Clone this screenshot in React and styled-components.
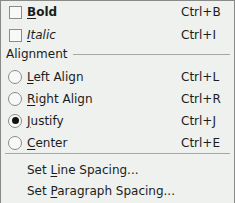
import styled, { createGlobalStyle } from "styled-components";

const GlobalStyle = createGlobalStyle`
    html, body {
        margin: 0;
        padding: 0;
        background: #eef1ee;
    }
`;

const Menu = styled.div`
    width: 235px;
    height: 203px;
    box-sizing: border-box;
    overflow: hidden;
    background: #eef1ee;
    border: 1px solid #878a87;
    border-bottom: none;
    font-family: "DejaVu Sans", "Liberation Sans", sans-serif;
    font-size: 12px;
    line-height: 14px;
    color: #1c1c1c;
    display: flex;
    flex-direction: column;
`;

const Item = styled.div`
    display: flex;
    align-items: center;
    height: ${({ $h = 21 }) => $h}px;
    box-sizing: border-box;
    padding-left: ${({ $pl = 7 }) => $pl}px;
    padding-top: ${({ $pt = 0 }) => $pt}px;
    padding-bottom: ${({ $pb = 0 }) => $pb}px;
    flex-shrink: 0;
`;

const Slot = styled.span`
    width: 19px;
    flex-shrink: 0;
    display: flex;
    align-items: center;
`;

const Label = styled.span`
    flex: 1;
    white-space: nowrap;
    font-weight: ${({ $bold }) => ($bold ? "bold" : "normal")};
    font-style: ${({ $italic }) => ($italic ? "italic" : "normal")};
`;

const Key = styled.span`
    width: 53px;
    flex-shrink: 0;
    white-space: nowrap;
`;

const Mnemonic = styled.span`
    text-decoration: underline;
    text-underline-offset: 2px;
`;

const CheckBox = styled.span`
    display: block;
    width: 13px;
    height: 13px;
    box-sizing: border-box;
    margin-left: 1px;
    border: 1px solid #8a8d8a;
    background: #f7f8f7;
`;

const Radio = styled.span`
    position: relative;
    display: block;
    width: 14px;
    height: 14px;
    box-sizing: border-box;
    border-radius: 50%;
    border: 1px solid #8a8d8a;
    background: #f7f8f7;

    &::after {
        content: "";
        display: ${({ $on }) => ($on ? "block" : "none")};
        position: absolute;
        left: 2.5px;
        top: 2.5px;
        width: 7px;
        height: 7px;
        border-radius: 50%;
        background: #111;
    }
`;

const Header = styled.div`
    display: flex;
    align-items: center;
    height: 18px;
    padding: 0 4px 4px 5px;
    box-sizing: border-box;
    gap: 6px;
    flex-shrink: 0;
`;

const Rule = styled.div`
    flex: 1;
    height: 1px;
    background: #a5a8a5;
`;

const Separator = styled.div`
    height: 6px;
    flex-shrink: 0;
    padding: 0 4px;

    &::before {
        content: "";
        display: block;
        height: 1px;
        background: #a5a8a5;
    }
`;

const label = (text, idx) => (
    <>
        {text.slice(0, idx)}
        <Mnemonic>{text[idx]}</Mnemonic>
        {text.slice(idx + 1)}
    </>
);

const radios = [
    { text: "Left Align", key: "Ctrl+L" },
    { text: "Right Align", key: "Ctrl+R" },
    { text: "Justify", key: "Ctrl+J", on: true },
    { text: "Center", key: "Ctrl+E" },
];

export default function App() {
    return (
        <>
            <GlobalStyle />
            <Menu>
                <Item $h={23} $pb={1}>
                    <Slot>
                        <CheckBox />
                    </Slot>
                    <Label $bold>{label("Bold", 0)}</Label>
                    <Key>Ctrl+B</Key>
                </Item>
                <Item $h={23} $pb={1}>
                    <Slot>
                        <CheckBox />
                    </Slot>
                    <Label $italic>{label("Italic", 0)}</Label>
                    <Key>Ctrl+I</Key>
                </Item>
                <Header>
                    <span>Alignment</span>
                    <Rule />
                </Header>
                {radios.map((r) => (
                    <Item key={r.text} $h={22} $pt={1}>
                        <Slot>
                            <Radio $on={r.on} />
                        </Slot>
                        <Label>{label(r.text, 0)}</Label>
                        <Key>{r.key}</Key>
                    </Item>
                ))}
                <Separator />
                <Item $pl={26}>
                    <Label>{label("Set Line Spacing...", 4)}</Label>
                </Item>
                <Item $pl={26}>
                    <Label>{label("Set Paragraph Spacing...", 4)}</Label>
                </Item>
            </Menu>
        </>
    );
}
